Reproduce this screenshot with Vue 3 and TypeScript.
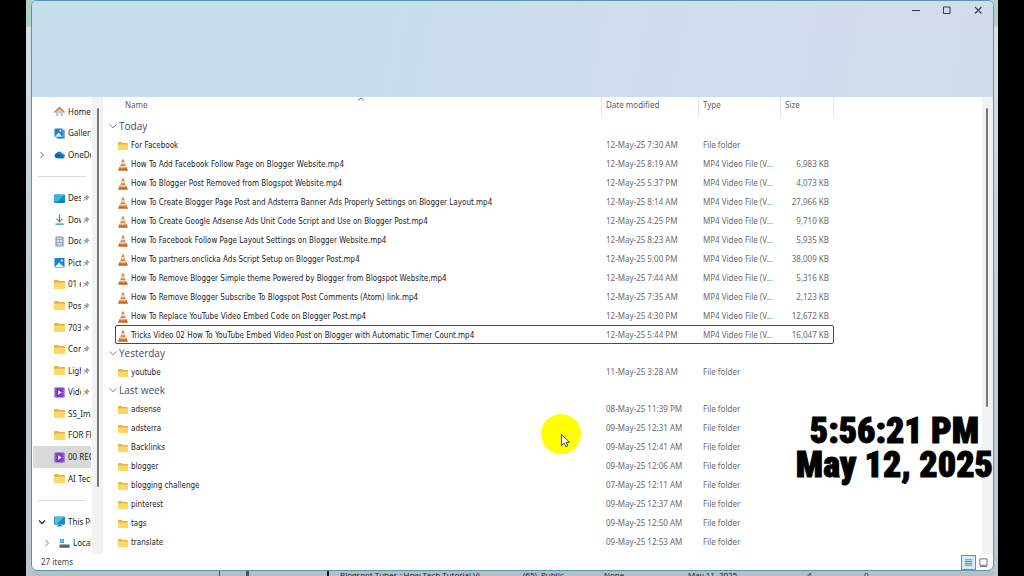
<script setup lang="ts">
import { ref } from 'vue'

type NavKind = 'home' | 'gallery' | 'cloud' | 'desktop' | 'download' | 'document' | 'picture' | 'folder' | 'video' | 'pc' | 'drive'
interface NavItem {
  label?: string
  icon?: NavKind
  pinned?: boolean
  chevron?: 'right' | 'down'
  nested?: boolean
}
interface Entry {
  name: string
  date: string
  size?: string
}
interface Group {
  label: string
  entries: Entry[]
}

const navItems: NavItem[] = [
  { label: 'Home', icon: 'home' },
  { label: 'Gallery', icon: 'gallery' },
  { label: 'OneDrive', icon: 'cloud', chevron: 'right' },
  {},
  { label: 'Desktop', icon: 'desktop', pinned: true },
  { label: 'Downloads', icon: 'download', pinned: true },
  { label: 'Documents', icon: 'document', pinned: true },
  { label: 'Pictures', icon: 'picture', pinned: true },
  { label: '01 editing', icon: 'folder', pinned: true },
  { label: 'Posts', icon: 'folder', pinned: true },
  { label: '703', icon: 'folder', pinned: true },
  { label: 'Content', icon: 'folder', pinned: true },
  { label: 'Lights', icon: 'folder', pinned: true },
  { label: 'Videos', icon: 'video', pinned: true },
  { label: 'SS_Images', icon: 'folder' },
  { label: 'FOR FEED', icon: 'folder' },
  { label: '00 RECORD', icon: 'video' },
  { label: 'AI Tech', icon: 'folder' },
  {},
  { label: 'This PC', icon: 'pc', chevron: 'down' },
  { label: 'Local Disk', icon: 'drive', chevron: 'right', nested: true },
]
const currentNav = ref('00 RECORD')

const groups: Group[] = [
  {
    label: 'Today',
    entries: [
      { name: 'For Facebook', date: '12-May-25 7:30 AM' },
      { name: 'How To Add Facebook Follow Page on Blogger Website.mp4', date: '12-May-25 8:19 AM', size: '6,983 KB' },
      { name: 'How To Blogger Post Removed from Blogspot Website.mp4', date: '12-May-25 5:37 PM', size: '4,073 KB' },
      { name: 'How To Create Blogger Page Post and Adsterra Banner Ads Properly Settings on Blogger Layout.mp4', date: '12-May-25 8:14 AM', size: '27,966 KB' },
      { name: 'How To Create Google Adsense Ads Unit Code Script and Use on Blogger Post.mp4', date: '12-May-25 4:25 PM', size: '9,710 KB' },
      { name: 'How To Facebook Follow Page Layout Settings on Blogger Website.mp4', date: '12-May-25 8:23 AM', size: '5,935 KB' },
      { name: 'How To partners.onclicka Ads Script Setup on Blogger Post.mp4', date: '12-May-25 5:00 PM', size: '38,009 KB' },
      { name: 'How To Remove Blogger Simple theme Powered by Blogger from Blogspot Website.mp4', date: '12-May-25 7:44 AM', size: '5,316 KB' },
      { name: 'How To Remove Blogger Subscribe To Blogspot Post Comments (Atom) link.mp4', date: '12-May-25 7:35 AM', size: '2,123 KB' },
      { name: 'How To Replace YouTube Video Embed Code on Blogger Post.mp4', date: '12-May-25 4:30 PM', size: '12,672 KB' },
      { name: 'Tricks Video 02 How To YouTube Embed Video Post on Blogger with Automatic Timer Count.mp4', date: '12-May-25 5:44 PM', size: '16,047 KB' },
    ],
  },
  { label: 'Yesterday', entries: [{ name: 'youtube', date: '11-May-25 3:28 AM' }] },
  {
    label: 'Last week',
    entries: [
      { name: 'adsense', date: '08-May-25 11:39 PM' },
      { name: 'adsterra', date: '09-May-25 12:31 AM' },
      { name: 'Backlinks', date: '09-May-25 12:41 AM' },
      { name: 'blogger', date: '09-May-25 12:06 AM' },
      { name: 'blogging challenge', date: '07-May-25 12:11 AM' },
      { name: 'pinterest', date: '09-May-25 12:37 AM' },
      { name: 'tags', date: '09-May-25 12:50 AM' },
      { name: 'translate', date: '09-May-25 12:53 AM' },
    ],
  },
]
const focused = ref(groups[0].entries[10].name)
</script>

<template>
  <div class="screen">
    <div class="desktop">
      <section class="window" aria-label="File Explorer">
        <header class="titlebar">
          <button type="button" aria-label="Minimize">
            <svg viewBox="0 0 10 10"><path d="M1 5.5h8" /></svg>
          </button>
          <button type="button" aria-label="Maximize">
            <svg viewBox="0 0 10 10"><rect x="1.5" y="2" width="6.5" height="6.5" rx="0.6" /></svg>
          </button>
          <button type="button" aria-label="Close">
            <svg viewBox="0 0 10 10"><path d="M2 2l6.5 6.5M8.5 2L2 8.5" /></svg>
          </button>
        </header>

        <div class="body">
          <nav class="sidebar" aria-label="Folders">
            <div class="nav-list">
              <template v-for="(item, i) in navItems" :key="i">
                <div v-if="!item.label" class="divider"></div>
                <button
                  v-else
                  type="button"
                  class="nav-item"
                  :class="{ nested: item.nested, current: item.label === currentNav }"
                  @click="currentNav = item.label"
                >
                  <span class="nav-chevron">
                    <svg v-if="item.chevron === 'right'" viewBox="0 0 8 8"><path d="M2.5 1l3 3-3 3" fill="none" stroke="#777" stroke-width="1" /></svg>
                    <svg v-else-if="item.chevron === 'down'" viewBox="0 0 8 8"><path d="M1 2.5l3 3 3-3" fill="none" stroke="#333" stroke-width="1.3" /></svg>
                  </span>
                  <svg class="nav-icon" viewBox="0 0 12 12">
                    <g v-if="item.icon === 'home'">
                      <path d="M2 5.5L6 2l4 3.500V11H7.300V7.500H4.700V11H2z" fill="#c9c6c8" />
                      <path d="M4.700 7.500h2.600V11H4.700z" fill="#f4f4f4" />
                      <path d="M1 6.500L6 1.700l5 4.800" fill="none" stroke="#d07f4f" stroke-width="1.700" stroke-linecap="round" />
                    </g>
                    <g v-else-if="item.icon === 'gallery'">
                      <path d="M3 2h8.500v9.500H3z" fill="#1a6fb4" />
                      <rect x="0.500" y="0.500" width="9" height="9.500" rx="1" fill="#1787d2" />
                      <path d="M1 9.500L5 5l4 4.500z" fill="#e8f6ff" />
                      <circle cx="7" cy="3" r="1" fill="#fff" />
                      <path d="M10 1v9.500" stroke="#fff" stroke-width="0.500" />
                    </g>
                    <g v-else-if="item.icon === 'cloud'">
                      <path d="M3 10a2.700 2.700 0 0 1-.3-5.300A3.500 3.500 0 0 1 9 4.800 2.600 2.600 0 0 1 9.500 10z" fill="#1c86d8" />
                      <path d="M3 10a2.700 2.700 0 0 1-.3-5.300C5 4.500 6 6 9 7.500L11 10z" fill="#0a68b8" />
                    </g>
                    <g v-else-if="item.icon === 'desktop'">
                      <rect x="0" y="1.500" width="12" height="9.500" rx="1" fill="#1593c5" />
                      <path d="M1 1.500H11.500L3 11H1a1 1 0 0 1-1-1V2.500a1 1 0 0 1 1-1z" fill="#35b5df" />
                      <path d="M1 9.800h10" stroke="#0d6f9c" stroke-width="1" />
                    </g>
                    <g v-else-if="item.icon === 'download'">
                      <path d="M6 .5v8M2.800 5.300L6 8.500l3.200-3.200M1.500 11h9" fill="none" stroke="#25a07a" stroke-width="1.200" />
                    </g>
                    <g v-else-if="item.icon === 'document'">
                      <rect x="1.500" y="0.500" width="9" height="11" rx="1" fill="#8f9fb4" />
                      <path d="M3 2.500h6M3 8h6M3 9.800h6" stroke="#f1f4f8" stroke-width="0.900" />
                      <path d="M3 4.200h2.500v2.300H3zM6.300 4.200H9v2.300H6.300z" fill="#dce4ef" />
                    </g>
                    <g v-else-if="item.icon === 'picture'">
                      <rect x="0.500" y="1" width="11" height="10.500" rx="1" fill="#1586cd" />
                      <path d="M1 11l4.500-5L11 11z" fill="#eaf7ff" />
                      <circle cx="8.500" cy="3.800" r="1.100" fill="#fff" />
                    </g>
                    <g v-else-if="item.icon === 'folder'">
                      <path d="M0 2a1 1 0 0 1 1-1h3.500l1.300 1.300h5.200a1 1 0 0 1 1 1V10a1 1 0 0 1-1 1H1a1 1 0 0 1-1-1z" fill="#e8b53b" />
                      <path d="M0 4H12V10a1 1 0 0 1-1 1H1a1 1 0 0 1-1-1z" fill="#fbd968" />
                    </g>
                    <g v-else-if="item.icon === 'video'">
                      <rect x="0.500" y="0.500" width="11" height="11" rx="1" fill="#7b3fc4" />
                      <path d="M1.800 1v10M10.200 1v10" stroke="#b592e6" stroke-width="1" stroke-dasharray="1.200 1" />
                      <path d="M4.600 3.600L8.300 6 4.600 8.400z" fill="#fff" />
                    </g>
                    <g v-else-if="item.icon === 'pc'">
                      <rect x="0" y="0.500" width="12" height="9" rx="1" fill="#1a8fc0" />
                      <path d="M.8 1.200h9.700L3 8.800H.8z" fill="#4fc0e2" />
                      <path d="M4.500 9.500h3v1h1.500v1H3v-1h1.500z" fill="#2c7da5" />
                    </g>
                    <g v-else>
                      <path d="M1 1h2v2H1zM3.500 1h2v2h-2zM1 3.500h2v2H1zM3.500 3.500h2v2h-2z" fill="#189bd7" />
                      <rect x="0.500" y="7" width="11" height="3.500" rx="0.500" fill="#53636e" />
                    </g>
                  </svg>
                  <span class="nav-label">{{ item.label }}</span>
                  <svg v-if="item.pinned" class="pin" viewBox="0 0 8 8">
                    <path d="M4.700 1L7.200 3.500l-.7.300-1.100 1-.3 1.500L2.200 3.400l1.500-.3 1-1.100z" fill="#a2a6aa" stroke="#85898d" stroke-width="0.600" />
                    <path d="M3.400 4.800L1 7.200" stroke="#85898d" stroke-width="0.700" />
                  </svg>
                </button>
              </template>
            </div>
            <div class="scrollbar nav-scroll"><div class="thumb"></div></div>
          </nav>

          <main class="files">
            <table>
              <colgroup>
                <col />
                <col class="col-date" />
                <col class="col-type" />
                <col class="col-size" />
              </colgroup>
              <thead>
                <tr>
                  <th scope="col" class="name-head">
                    Name
                    <svg class="sort" viewBox="0 0 8 4"><path d="M1 3.500l3-2.500 3 2.500" fill="none" stroke="#666" stroke-width="0.900" /></svg>
                  </th>
                  <th scope="col">Date modified</th>
                  <th scope="col">Type</th>
                  <th scope="col" class="last">Size</th>
                </tr>
              </thead>
              <tbody v-for="group in groups" :key="group.label">
                <tr class="group">
                  <th colspan="4" scope="rowgroup">
                    <button type="button">
                      <svg viewBox="0 0 8 8"><path d="M0.500 2.500L4 5.800l3.500-3.300" fill="none" stroke="#777" stroke-width="0.900" /></svg>
                      {{ group.label }}
                    </button>
                  </th>
                </tr>
                <tr
                  v-for="entry in group.entries"
                  :key="entry.name"
                  :class="{ focused: focused === entry.name }"
                  @click="focused = entry.name"
                >
                  <td class="name">
                    <div>
                      <svg v-if="entry.size" viewBox="1 0 10 12">
                        <path d="M2.500 8h7l1.500 3.800H1z" fill="#c4682a" />
                        <path d="M5.200.4h1.600L9.300 9.300q-3.300 1.500-6.600 0z" fill="#ec842c" />
                        <path d="M4.500 3h3l.6 2.200H3.900zM3.300 7h5.400l.4 1.500H2.900z" fill="#dcdad8" />
                      </svg>
                      <svg v-else viewBox="0 0 11 12">
                        <path d="M0 2.500a1 1 0 0 1 1-1h3l1.300 1.300H10a1 1 0 0 1 1 1V9.500a1 1 0 0 1-1 1H1a1 1 0 0 1-1-1z" fill="#e8b53b" />
                        <path d="M0 4.300H11V9.500a1 1 0 0 1-1 1H1a1 1 0 0 1-1-1z" fill="#fbd968" />
                      </svg>
                      {{ entry.name }}
                    </div>
                  </td>
                  <td>{{ entry.date }}</td>
                  <td>{{ entry.size ? 'MP4 Video File (V...' : 'File folder' }}</td>
                  <td class="size">{{ entry.size }}</td>
                </tr>
              </tbody>
            </table>
          </main>
          <div class="scrollbar file-scroll"><div class="thumb"></div></div>
        </div>

        <footer class="status">
          <span>27 items</span>
          <div class="views">
            <button type="button" class="active" aria-label="Details view">
              <svg viewBox="0 0 10 10"><path d="M1 2h8M1 4h8M1 6h8M1 8h8" stroke="#5b6b78" stroke-width="0.900" /></svg>
            </button>
            <button type="button" aria-label="Large icons view">
              <svg viewBox="0 0 10 10"><path d="M1 1h8v7H1zM1 9.500h8" fill="none" stroke="#5d6468" stroke-width="1" /></svg>
            </button>
          </div>
        </footer>
      </section>

      <div class="behind">
        <span class="cell-bars"></span>
        <span class="cell-thumb"></span>
        <span class="cell-title">Blogspot Tubes : How Tech Tutorial Vi</span>
        <span class="cell-count">(65)</span>
        <span class="cell-vis">Public</span>
        <span class="cell-none">None</span>
        <span class="cell-date">May 11, 2025</span>
        <span class="cell-num">4</span>
        <span class="cell-zero">0</span>
        <span>–</span>
      </div>
    </div>

    <div class="pointer">
      <svg viewBox="0 0 40 40">
        <circle cx="20" cy="20" r="20" fill="#ffff00" />
        <path d="M20.500 20.500v11l2.700-2.400 1.800 3.600 1.800-.9-1.700-3.500h3.400z" fill="#fff" stroke="#333" stroke-width="0.900" />
      </svg>
    </div>
    <div class="clock"><time>5:56:21 PM</time><time>May 12, 2025</time></div>
  </div>
</template>

<style>
body {
  background: #000;
}
</style>

<style scoped>
* {
  box-sizing: border-box;
}
.screen {
  position: relative;
  height: 100vh;
  padding: 0 26px;
  overflow: hidden;
  background: #000;
  font-family: "Noto Sans", "Open Sans", sans-serif;
  font-size: 8px;
  line-height: 12px;
  color: #1c1c1c;
}
button {
  margin: 0;
  padding: 0;
  border: 0;
  background: none;
  color: inherit;
  font: inherit;
}
svg {
  display: block;
  flex: none;
}
.desktop {
  display: flex;
  flex-direction: column;
  height: 100%;
  padding: 0 4px 0 5px;
  background: linear-gradient(#b4cfc8 0, #b4cfc8 26px, #d9e1e3 27px, #d6dce2 96px, #c5d2d9 200px, #bcc6cc 100%);
}
.window {
  flex: 1;
  min-height: 0;
  display: flex;
  flex-direction: column;
  overflow: hidden;
  border: 1px solid #5795b4;
  border-radius: 6px;
  background: #fff;
}
.titlebar {
  flex: none;
  display: flex;
  justify-content: flex-end;
  align-items: flex-start;
  height: 96px;
  background: linear-gradient(100deg, #c5dfea 0%, #c7deea 35%, #d0dcec 65%, #d2dbea 100%);
}
.titlebar button {
  display: grid;
  place-items: center;
  width: 31px;
  height: 18px;
}
.titlebar svg {
  width: 10px;
  height: 10px;
  fill: none;
  stroke: #31404e;
  stroke-width: 1.1;
}
.body {
  flex: 1;
  min-height: 0;
  display: flex;
}
.sidebar {
  display: flex;
  flex: none;
  width: 71px;
}
.nav-list {
  flex: 1;
  min-width: 0;
  display: flex;
  flex-direction: column;
  padding: 4px 1px 0 1px;
}
.nav-item {
  flex: 1;
  min-height: 0;
  display: flex;
  align-items: center;
  padding-left: 5px;
  overflow: hidden;
  white-space: nowrap;
  text-align: left;
}
.nav-item.nested {
  padding-left: 10px;
}
.nav-item.current {
  background: #d9d9d9;
}
.nav-chevron {
  flex: none;
  width: 16px;
}
.nav-chevron svg {
  width: 8px;
  height: 8px;
}
.nav-icon {
  width: 11px;
  height: 11px;
  margin-right: 3px;
}
.nav-label {
  flex: 1;
  min-width: 0;
  overflow: hidden;
}
.pin {
  width: 8px;
  height: 8px;
  margin: 0 1px 0 1px;
}
.divider {
  flex: 1;
  margin: 0 5px;
  background: linear-gradient(#dcdcdc, #dcdcdc) center / 100% 1px no-repeat;
}
.scrollbar {
  flex: none;
  width: 11px;
  padding: 11px 4px 0 5px;
  background: #f1f2f2;
}
.thumb {
  width: 2px;
  border-radius: 1px;
  background: #777;
}
.nav-scroll .thumb {
  height: 85%;
}
.file-scroll {
  padding-left: 4px;
}
.file-scroll .thumb {
  height: 67%;
}
.files {
  flex: 1;
  min-width: 0;
  padding: 0 148px 0 12px;
}
table {
  width: 100%;
  table-layout: fixed;
  border-collapse: separate;
  border-spacing: 0;
}
.col-date {
  width: 97px;
}
.col-type {
  width: 82px;
}
.col-size {
  width: 54px;
}
thead th {
  position: relative;
  height: 20px;
  padding: 0 0 4px 4px;
  border-left: 1px solid #e3e5e8;
  color: #5a6068;
  font-weight: 400;
  text-align: left;
}
thead th.name-head {
  padding-left: 10px;
  border-left: 0;
}
thead th.last {
  border-right: 1px solid #e3e5e8;
}
.sort {
  position: absolute;
  top: 0;
  left: 6px;
  right: 0;
  width: 8px;
  height: 4px;
  margin: 0 auto;
}
.group th {
  height: 18px;
  padding: 0;
  font-weight: 400;
  text-align: left;
}
.group button {
  display: flex;
  align-items: center;
  gap: 2px;
  margin-left: -6px;
  color: #3f4a68;
  font-family: "Open Sans", sans-serif;
  font-size: 10px;
  line-height: 18px;
}
.group svg {
  width: 8px;
  height: 8px;
}
td {
  height: 19px;
  padding: 0 0 0 5px;
  overflow: hidden;
  color: #6b6b6b;
  white-space: nowrap;
}
td.name {
  padding-left: 3px;
  color: #1c1c1c;
  font-family: "DejaVu Sans Condensed", "Noto Sans", sans-serif;
}
td.name div {
  display: flex;
  align-items: center;
  gap: 3px;
  padding-top: 2px;
}
td.name svg {
  width: 10px;
  height: 12px;
}
td.size {
  padding: 0 5px 0 0;
  text-align: right;
}
.focused {
  outline: 1px solid #4a4a4a;
  outline-offset: -1px;
  border-radius: 2px;
}
.status {
  flex: none;
  display: flex;
  align-items: center;
  justify-content: space-between;
  height: 16px;
  padding: 0 2px 0 9px;
  color: #454a52;
}
.views {
  display: flex;
}
.views button {
  display: grid;
  place-items: center;
  width: 15px;
  height: 15px;
}
.views .active {
  border: 1px solid #4d9ccc;
  background: #d5ebf8;
}
.views svg {
  width: 9px;
  height: 9px;
}
.behind {
  flex: none;
  display: flex;
  height: 5px;
  overflow: hidden;
  background: #b4bec3;
  color: #16191b;
  font-family: "Open Sans", sans-serif;
  line-height: 8px;
  white-space: nowrap;
}
.cell-bars {
  width: 30px;
  margin-left: 188px;
  border: 0 solid #4c5357;
  border-width: 0 3px 0 1px;
}
.cell-thumb {
  width: 80px;
  margin-right: 11px;
  border-right: 2px solid #111;
}
.cell-title {
  width: 183px;
}
.cell-count {
  width: 18px;
}
.cell-vis {
  width: 63px;
}
.cell-none {
  width: 84px;
}
.cell-date {
  width: 119px;
}
.cell-num {
  width: 57px;
}
.cell-zero {
  width: 83px;
}
.pointer {
  position: absolute;
  top: 414px;
  left: 541px;
  width: 40px;
  height: 40px;
}
.clock {
  position: absolute;
  top: 414px;
  right: 31px;
  display: flex;
  flex-direction: column;
  align-items: center;
  color: #000;
  font-family: "Roboto Condensed", "Roboto", sans-serif;
  font-size: 36px;
  font-weight: 900;
  line-height: 34px;
  white-space: nowrap;
  -webkit-text-stroke: 1px #000;
}
</style>
